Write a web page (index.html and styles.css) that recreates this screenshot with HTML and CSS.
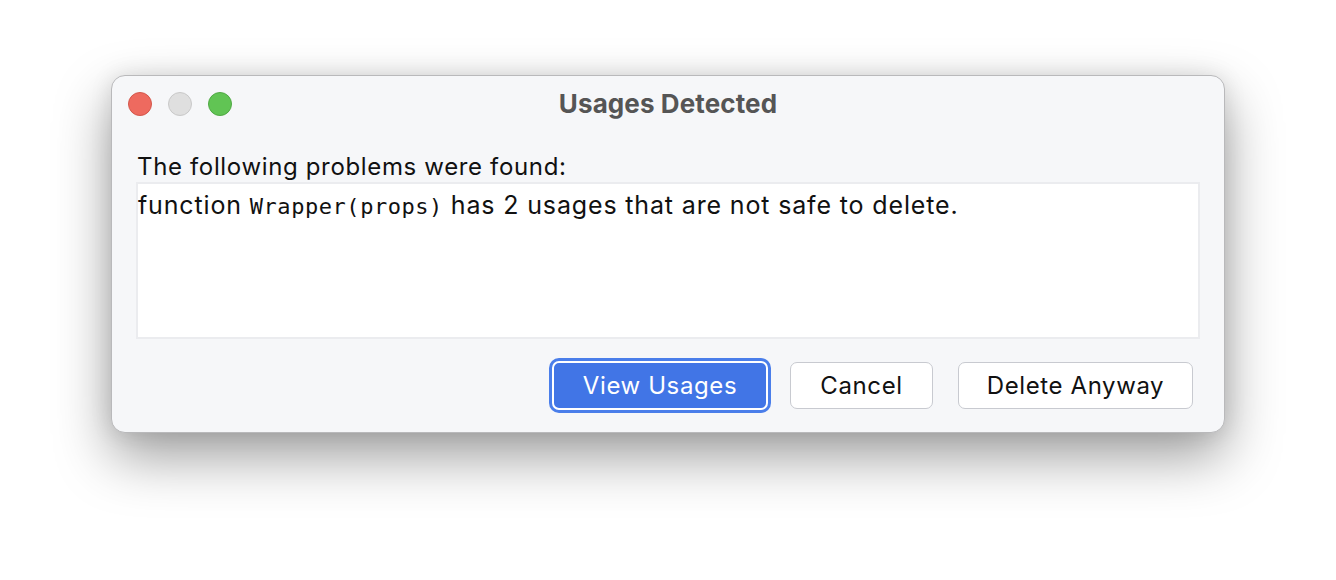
FILE: index.html
```html
<!DOCTYPE html>
<html lang="en">
<head>
<meta charset="utf-8">
<title>Usages Detected</title>
<link rel="stylesheet" href="styles.css">
</head>
<body>
<div class="stage">
  <div class="window">
    <div class="titlebar">
      <div class="lights">
        <span class="light red"></span>
        <span class="light gray"></span>
        <span class="light green"></span>
      </div>
      <div class="title">Usages Detected</div>
      <div class="spacer"></div>
    </div>
    <div class="content">
      <div class="label">The following problems were found:</div>
      <div class="problems">function <code class="mono">Wrapper(props)</code> has 2 usages that are not safe to delete.</div>
      <div class="actions">
        <button class="btn primary">View Usages</button>
        <button class="btn cancel">Cancel</button>
        <button class="btn delete">Delete Anyway</button>
      </div>
    </div>
  </div>
</div>
</body>
</html>
```

FILE: styles.css
```css
* { box-sizing: border-box; }
html, body { margin: 0; padding: 0; background: #ffffff; }
body {
  font-family: "Inter", "Noto Sans", "Liberation Sans", sans-serif;
  color: #1a1a1a;
  width: 1336px;
  height: 580px;
  overflow: hidden;
}
.stage {
  padding: 75px 0 0 111px;
}
.window {
  width: 1114px;
  height: 358px;
  border: 1px solid #b9b9bb;
  border-radius: 14px;
  background: #f6f7f9;
  box-shadow: 0 24px 55px rgba(0,0,0,0.38), 0 0 22px rgba(0,0,0,0.10);
  display: flex;
  flex-direction: column;
}
.titlebar {
  height: 56px;
  display: grid;
  grid-template-columns: 1fr auto 1fr;
  align-items: center;
}
.lights {
  display: flex;
  gap: 16px;
  padding-left: 16px;
}
.light {
  width: 24px;
  height: 24px;
  border-radius: 50%;
  display: block;
}
.red { background: #ee6a5f; border: 1px solid #d4574b; }
.gray { background: #dfdfdf; border: 1px solid #c9c9c9; }
.green { background: #61c454; border: 1px solid #50a944; }
.title {
  font-size: 26px;
  font-weight: 700;
  color: #555555;
  letter-spacing: 0.1px;
  line-height: 30px;
}
.content {
  padding: 21px 24px 22px 24px;
  display: flex;
  flex-direction: column;
  flex: 1;
}
.label {
  font-size: 24px;
  letter-spacing: 0.65px;
  line-height: 28px;
  padding-left: 1px;
  color: #111;
}
.problems {
  margin-top: 1px;
  height: 157px;
  background: #ffffff;
  border: 2px solid #ebecef;
  padding: 7px 0 0 0;
  font-size: 25px;
  letter-spacing: 0.85px;
  line-height: 28px;
  color: #111;
}
.mono {
  font-family: "DejaVu Sans Mono", "Liberation Mono", monospace;
  font-size: 22px;
  letter-spacing: 0.55px;
}
.actions {
  margin-top: auto;
  display: flex;
  justify-content: flex-end;
  align-items: center;
  padding-right: 7px;
}
.btn {
  font-family: "Inter", "Noto Sans", "Liberation Sans", sans-serif;
  font-size: 24px;
  letter-spacing: 0.6px;
  height: 47px;
  border-radius: 7px;
  background: #ffffff;
  border: 1.5px solid #c8cad0;
  color: #111;
  padding: 0;
  cursor: default;
}
.primary {
  width: 216px;
  height: 49px;
  background: #4175e6;
  color: #ffffff;
  border: 2px solid #ffffff;
  box-shadow: 0 0 0 3px #4a7eea;
  margin-right: 22px;
}
.cancel {
  width: 143px;
  margin-right: 25px;
}
.delete {
  width: 235px;
}
```
